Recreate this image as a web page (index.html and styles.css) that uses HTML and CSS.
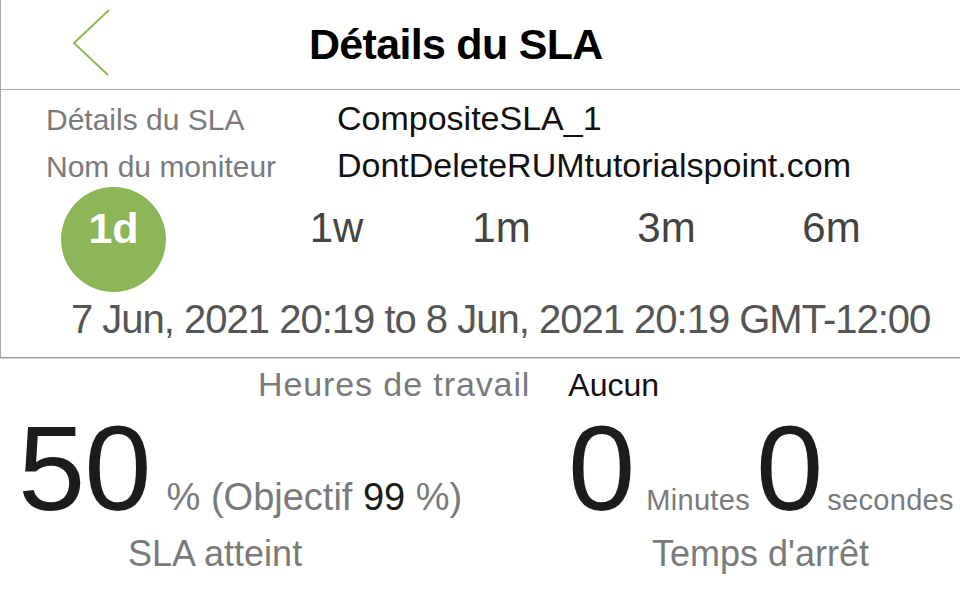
FILE: index.html
```html
<!DOCTYPE html>
<html lang="fr">
<head>
<meta charset="utf-8">
<title>Détails du SLA</title>
<link rel="stylesheet" href="styles.css">
</head>
<body>
<div class="page">
  <section class="top">
    <header class="header">
      <svg class="back" width="40" height="70" viewBox="0 0 40 70" aria-label="Retour">
        <polyline points="37,1 2,34 36,66" fill="none" stroke="#8bbd4e" stroke-width="2"/>
      </svg>
      <h1 class="title">Détails du SLA</h1>
    </header>
    <div class="info">
      <div class="info-row">
        <span class="info-label">Détails du SLA</span>
        <span class="info-value">CompositeSLA_1</span>
      </div>
      <div class="info-row">
        <span class="info-label">Nom du moniteur</span>
        <span class="info-value">DontDeleteRUMtutorialspoint.com</span>
      </div>
    </div>
    <div class="tabs">
      <div class="tab tab-active"><span>1d</span></div>
      <div class="tab">1w</div>
      <div class="tab">1m</div>
      <div class="tab">3m</div>
      <div class="tab">6m</div>
    </div>
    <div class="range">7 Jun, 2021 20:19 to 8 Jun, 2021 20:19 GMT-12:00</div>
  </section>
  <section class="bottom">
    <div class="hours">
      <span class="hours-label">Heures de travail</span>
      <span class="hours-value">Aucun</span>
    </div>
    <div class="stats">
      <div class="stat stat-sla">
        <div class="stat-value">
          <span class="big">50</span>
          <span class="unit">% (Objectif <b class="dark">99</b> %)</span>
        </div>
        <div class="stat-label">SLA atteint</div>
      </div>
      <div class="stat stat-down">
        <div class="stat-value">
          <span class="big">0</span>
          <span class="small-unit">Minutes</span>
          <span class="big">0</span>
          <span class="small-unit">secondes</span>
        </div>
        <div class="stat-label">Temps d'arrêt</div>
      </div>
    </div>
  </section>
</div>
</body>
</html>
```
FILE: styles.css
```css
* { box-sizing: border-box; margin: 0; padding: 0; }
html, body { background: #fff; }
body {
  font-family: "Liberation Sans", Arial, Helvetica, sans-serif;
  color: #111;
  width: 960px;
  height: 600px;
  overflow: hidden;
}
.page { width: 960px; height: 600px; }

.top {
  border-left: 1px solid #aaa;
  border-bottom: 1px solid #999;
  box-shadow: 0 1px 0 #d6d6d6;
}

.header {
  height: 90px;
  border-bottom: 1px solid #b0b0b0;
  display: flex;
  align-items: center;
  padding-left: 71px;
}
.back { display: block; flex: none; margin-top: -1px; }
.title {
  margin-left: 197px;
  font-size: 43px;
  font-weight: 700;
  letter-spacing: -0.7px;
  line-height: 89px;
  color: #000;
}

.info { padding-top: 5px; }
.info-row {
  height: 47px;
  display: flex;
  align-items: baseline;
  padding-left: 45px;
}
.info-label {
  width: 291px;
  flex: none;
  font-size: 30px;
  line-height: 47px;
  color: #7a7a7a;
}
.info-value {
  font-size: 34px;
  line-height: 47px;
  color: #111;
}

.tabs {
  margin-top: -2px;
  height: 105px;
  display: flex;
  align-items: flex-start;
  padding-left: 60px;
}
.tab {
  width: 165px;
  text-align: center;
  font-size: 42px;
  line-height: 81px;
  color: #444;
}
.tab-active {
  width: 105px;
  height: 105px;
  border-radius: 50%;
  background: #8bb556;
  margin-right: 88px;
  color: #fff;
  font-weight: 700;
  font-size: 43px;
  line-height: 82px;
}

.range {
  margin-top: 2px;
  padding-left: 70px;
  padding-bottom: 13px;
  font-size: 40px;
  line-height: 50px;
  letter-spacing: -1px;
  color: #555;
}

.hours {
  margin-top: 4px;
  display: flex;
  align-items: baseline;
  gap: 38px;
  padding-left: 258px;
}
.hours-label {
  font-size: 34px;
  line-height: 44px;
  letter-spacing: 0.9px;
  color: #7a7a7a;
}
.hours-value {
  font-size: 32px;
  line-height: 44px;
  color: #111;
}

.stats {
  margin-top: 5px;
  display: grid;
  grid-template-columns: 545px 1fr;
}
.stat-value {
  display: flex;
  align-items: baseline;
  height: 112px;
}
.stat-sla .stat-value { padding-left: 18px; }
.stat-down .stat-value { padding-left: 23px; }
.big {
  font-size: 121px;
  line-height: 112px;
  color: #1c1c1c;
  letter-spacing: -1px;
}
.unit {
  margin-left: 16px;
  font-size: 38px;
  color: #7a7a7a;
}
.dark { font-weight: 400; color: #1c1c1c; }
.small-unit {
  font-size: 29px;
  letter-spacing: 0.3px;
  color: #7a7a7a;
  margin: 0 6px 0 12px;
}
.small-unit:last-child { margin: 0 0 0 5px; }
.stat-label {
  margin-top: 8px;
  font-size: 36px;
  line-height: 44px;
  color: #7a7a7a;
}
.stat-sla .stat-label { padding-left: 128px; }
.stat-down .stat-label { padding-left: 107px; }
```
